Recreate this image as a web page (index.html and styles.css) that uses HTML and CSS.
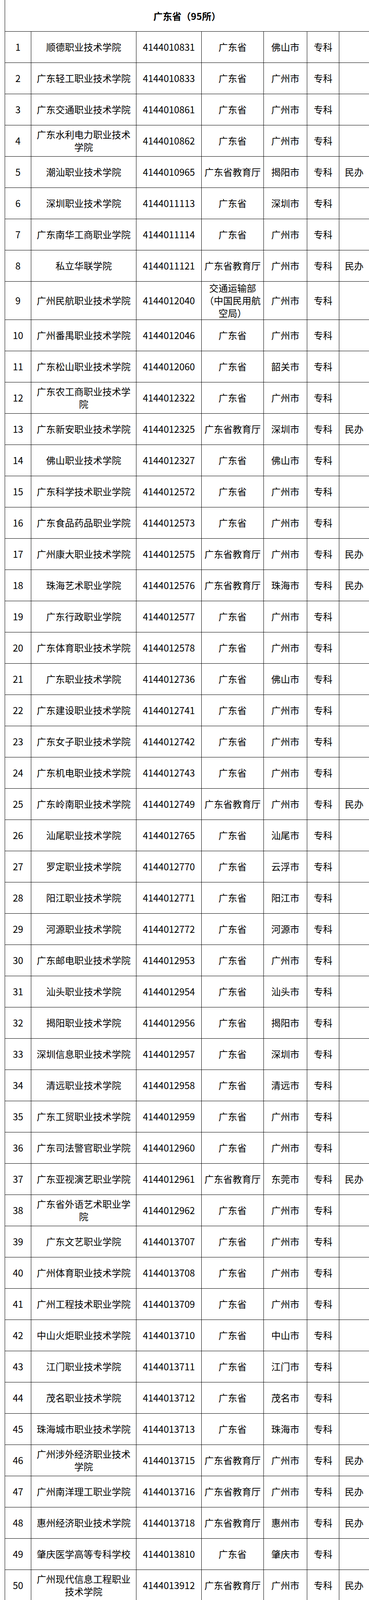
FILE: index.html
```html
<!DOCTYPE html>
<html lang="zh-CN">
<head>
<meta charset="utf-8">
<title>广东省（95所）</title>
<link rel="stylesheet" href="styles.css">
</head>
<body>
<div class="page">
<table class="list">
<colgroup>
<col class="c-no"><col class="c-name"><col class="c-code"><col class="c-dept"><col class="c-city"><col class="c-level"><col class="c-note">
</colgroup>
<thead>
<tr class="title-row"><th colspan="7">广东省（95所）</th></tr>
</thead>
<tbody>
<tr><td>1</td><td>顺德职业技术学院</td><td>4144010831</td><td>广东省</td><td>佛山市</td><td>专科</td><td></td></tr>
<tr><td>2</td><td>广东轻工职业技术学院</td><td>4144010833</td><td>广东省</td><td>广州市</td><td>专科</td><td></td></tr>
<tr><td>3</td><td>广东交通职业技术学院</td><td>4144010861</td><td>广东省</td><td>广州市</td><td>专科</td><td></td></tr>
<tr><td>4</td><td>广东水利电力职业技术学院</td><td>4144010862</td><td>广东省</td><td>广州市</td><td>专科</td><td></td></tr>
<tr><td>5</td><td>潮汕职业技术学院</td><td>4144010965</td><td>广东省教育厅</td><td>揭阳市</td><td>专科</td><td>民办</td></tr>
<tr><td>6</td><td>深圳职业技术学院</td><td>4144011113</td><td>广东省</td><td>深圳市</td><td>专科</td><td></td></tr>
<tr><td>7</td><td>广东南华工商职业学院</td><td>4144011114</td><td>广东省</td><td>广州市</td><td>专科</td><td></td></tr>
<tr><td>8</td><td>私立华联学院</td><td>4144011121</td><td>广东省教育厅</td><td>广州市</td><td>专科</td><td>民办</td></tr>
<tr><td>9</td><td>广州民航职业技术学院</td><td>4144012040</td><td>交通运输部（中国民用航空局）</td><td>广州市</td><td>专科</td><td></td></tr>
<tr><td>10</td><td>广州番禺职业技术学院</td><td>4144012046</td><td>广东省</td><td>广州市</td><td>专科</td><td></td></tr>
<tr><td>11</td><td>广东松山职业技术学院</td><td>4144012060</td><td>广东省</td><td>韶关市</td><td>专科</td><td></td></tr>
<tr><td>12</td><td>广东农工商职业技术学院</td><td>4144012322</td><td>广东省</td><td>广州市</td><td>专科</td><td></td></tr>
<tr><td>13</td><td>广东新安职业技术学院</td><td>4144012325</td><td>广东省教育厅</td><td>深圳市</td><td>专科</td><td>民办</td></tr>
<tr><td>14</td><td>佛山职业技术学院</td><td>4144012327</td><td>广东省</td><td>佛山市</td><td>专科</td><td></td></tr>
<tr><td>15</td><td>广东科学技术职业学院</td><td>4144012572</td><td>广东省</td><td>广州市</td><td>专科</td><td></td></tr>
<tr><td>16</td><td>广东食品药品职业学院</td><td>4144012573</td><td>广东省</td><td>广州市</td><td>专科</td><td></td></tr>
<tr><td>17</td><td>广州康大职业技术学院</td><td>4144012575</td><td>广东省教育厅</td><td>广州市</td><td>专科</td><td>民办</td></tr>
<tr><td>18</td><td>珠海艺术职业学院</td><td>4144012576</td><td>广东省教育厅</td><td>珠海市</td><td>专科</td><td>民办</td></tr>
<tr><td>19</td><td>广东行政职业学院</td><td>4144012577</td><td>广东省</td><td>广州市</td><td>专科</td><td></td></tr>
<tr><td>20</td><td>广东体育职业技术学院</td><td>4144012578</td><td>广东省</td><td>广州市</td><td>专科</td><td></td></tr>
<tr><td>21</td><td>广东职业技术学院</td><td>4144012736</td><td>广东省</td><td>佛山市</td><td>专科</td><td></td></tr>
<tr><td>22</td><td>广东建设职业技术学院</td><td>4144012741</td><td>广东省</td><td>广州市</td><td>专科</td><td></td></tr>
<tr><td>23</td><td>广东女子职业技术学院</td><td>4144012742</td><td>广东省</td><td>广州市</td><td>专科</td><td></td></tr>
<tr><td>24</td><td>广东机电职业技术学院</td><td>4144012743</td><td>广东省</td><td>广州市</td><td>专科</td><td></td></tr>
<tr><td>25</td><td>广东岭南职业技术学院</td><td>4144012749</td><td>广东省教育厅</td><td>广州市</td><td>专科</td><td>民办</td></tr>
<tr><td>26</td><td>汕尾职业技术学院</td><td>4144012765</td><td>广东省</td><td>汕尾市</td><td>专科</td><td></td></tr>
<tr><td>27</td><td>罗定职业技术学院</td><td>4144012770</td><td>广东省</td><td>云浮市</td><td>专科</td><td></td></tr>
<tr><td>28</td><td>阳江职业技术学院</td><td>4144012771</td><td>广东省</td><td>阳江市</td><td>专科</td><td></td></tr>
<tr><td>29</td><td>河源职业技术学院</td><td>4144012772</td><td>广东省</td><td>河源市</td><td>专科</td><td></td></tr>
<tr><td>30</td><td>广东邮电职业技术学院</td><td>4144012953</td><td>广东省</td><td>广州市</td><td>专科</td><td></td></tr>
<tr><td>31</td><td>汕头职业技术学院</td><td>4144012954</td><td>广东省</td><td>汕头市</td><td>专科</td><td></td></tr>
<tr><td>32</td><td>揭阳职业技术学院</td><td>4144012956</td><td>广东省</td><td>揭阳市</td><td>专科</td><td></td></tr>
<tr><td>33</td><td>深圳信息职业技术学院</td><td>4144012957</td><td>广东省</td><td>深圳市</td><td>专科</td><td></td></tr>
<tr><td>34</td><td>清远职业技术学院</td><td>4144012958</td><td>广东省</td><td>清远市</td><td>专科</td><td></td></tr>
<tr><td>35</td><td>广东工贸职业技术学院</td><td>4144012959</td><td>广东省</td><td>广州市</td><td>专科</td><td></td></tr>
<tr><td>36</td><td>广东司法警官职业学院</td><td>4144012960</td><td>广东省</td><td>广州市</td><td>专科</td><td></td></tr>
<tr><td>37</td><td>广东亚视演艺职业学院</td><td>4144012961</td><td>广东省教育厅</td><td>东莞市</td><td>专科</td><td>民办</td></tr>
<tr><td>38</td><td>广东省外语艺术职业学院</td><td>4144012962</td><td>广东省</td><td>广州市</td><td>专科</td><td></td></tr>
<tr><td>39</td><td>广东文艺职业学院</td><td>4144013707</td><td>广东省</td><td>广州市</td><td>专科</td><td></td></tr>
<tr><td>40</td><td>广州体育职业技术学院</td><td>4144013708</td><td>广东省</td><td>广州市</td><td>专科</td><td></td></tr>
<tr><td>41</td><td>广州工程技术职业学院</td><td>4144013709</td><td>广东省</td><td>广州市</td><td>专科</td><td></td></tr>
<tr><td>42</td><td>中山火炬职业技术学院</td><td>4144013710</td><td>广东省</td><td>中山市</td><td>专科</td><td></td></tr>
<tr><td>43</td><td>江门职业技术学院</td><td>4144013711</td><td>广东省</td><td>江门市</td><td>专科</td><td></td></tr>
<tr><td>44</td><td>茂名职业技术学院</td><td>4144013712</td><td>广东省</td><td>茂名市</td><td>专科</td><td></td></tr>
<tr><td>45</td><td>珠海城市职业技术学院</td><td>4144013713</td><td>广东省</td><td>珠海市</td><td>专科</td><td></td></tr>
<tr><td>46</td><td>广州涉外经济职业技术学院</td><td>4144013715</td><td>广东省教育厅</td><td>广州市</td><td>专科</td><td>民办</td></tr>
<tr><td>47</td><td>广州南洋理工职业学院</td><td>4144013716</td><td>广东省教育厅</td><td>广州市</td><td>专科</td><td>民办</td></tr>
<tr><td>48</td><td>惠州经济职业技术学院</td><td>4144013718</td><td>广东省教育厅</td><td>惠州市</td><td>专科</td><td>民办</td></tr>
<tr><td>49</td><td>肇庆医学高等专科学校</td><td>4144013810</td><td>广东省</td><td>肇庆市</td><td>专科</td><td></td></tr>
<tr><td>50</td><td>广州现代信息工程职业技术学院</td><td>4144013912</td><td>广东省教育厅</td><td>广州市</td><td>专科</td><td>民办</td></tr>
</tbody>
</table>
</div>
</body>
</html>
```

FILE: styles.css
```css
html, body {
  margin: 0;
  padding: 0;
  background: #ffffff;
}

.page {
  padding-left: 12px;
}

.list {
  width: 932px;
  table-layout: fixed;
  border-collapse: collapse;
  font-family: "Noto Sans CJK SC", "Microsoft YaHei", sans-serif;
  font-size: 24px;
  color: #000000;
}

.c-no { width: 67px; }
.c-name { width: 269px; }
.c-code { width: 167px; }
.c-dept { width: 159px; }
.c-city { width: 111px; }
.c-level { width: 82px; }
.c-note { width: 77px; }

.list th,
.list td {
  border: 1px solid #000000;
  text-align: center;
  vertical-align: middle;
  line-height: 32.34px;
  padding: 0 6px;
}

.list tr {
  height: 80px;
}

.title-row th {
  border-top: 0;
  font-weight: bold;
  padding-top: 2px;
}
```
